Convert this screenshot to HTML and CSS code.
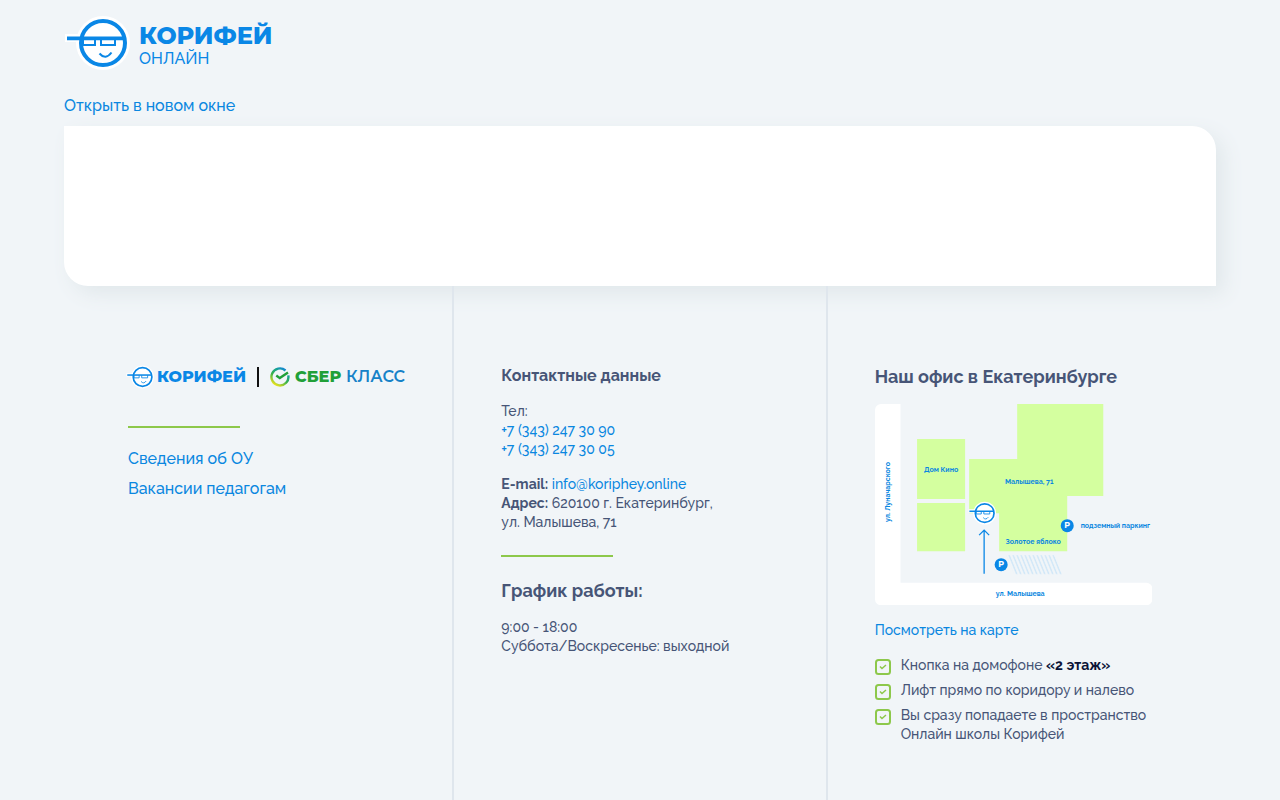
FILE: index.html
```html
<!DOCTYPE html>
<html lang="ru">
<head>
<meta charset="utf-8">
<meta name="viewport" content="width=device-width, initial-scale=1">
<title>Корифей Онлайн</title>
<link rel="stylesheet" href="styles.css">
</head>
<body>
<svg class="defs" width="0" height="0" aria-hidden="true">
  <symbol id="face" viewBox="0 0 66 56">
    <circle cx="39" cy="28" r="27" fill="#fff"/>
    <path d="M1 19h16v8H1z" fill="#fff"/>
    <g fill="none" stroke="#0a87e6">
      <circle cx="39" cy="28" r="22" stroke-width="4"/>
      <path d="M3 23.400h58" stroke-width="3.600"/>
      <path d="M19 24v6h12v-6M37 24v6h14v-6" stroke-width="2"/>
      <path d="M35.500 38.500q6 7 12-1" stroke-width="2"/>
    </g>
  </symbol>
</svg>
<header class="header">
  <a class="brand" href="#" aria-label="Корифей Онлайн">
    <svg class="brand-face"><use href="#face"/></svg>
    <span class="brand-text"><span class="brand-name">КОРИФЕЙ</span><span class="brand-sub">ОНЛАЙН</span></span>
  </a>
</header>
<main class="main">
  <a class="open-link" href="#">Открыть в новом окне</a>
  <section class="card"></section>
</main>
<footer class="footer">
  <div class="column">
    <div class="partners">
      <svg class="partner-face"><use href="#face"/></svg>
      <span class="partner-name">КОРИФЕЙ</span>
      <span class="partner-rule"></span>
      <svg class="sber" viewBox="0 0 20 20" aria-hidden="true">
        <defs><linearGradient id="ring" x1="0.2" y1="1" x2="0.8" y2="0">
          <stop offset="0" stop-color="#f4e51d"/><stop offset="0.45" stop-color="#36b14a"/><stop offset="0.750" stop-color="#16a394"/><stop offset="1" stop-color="#1584d8"/>
        </linearGradient></defs>
        <path d="M15.500 3.500A8.500 8.500 0 1 0 18.300 8.400" fill="none" stroke="url(#ring)" stroke-width="2.400"/>
        <path d="M6.300 8.500l3.500 2.600L18 5.600" fill="none" stroke="#21a038" stroke-width="2.400"/>
      </svg>
      <span class="sber-name">СБЕР</span><span class="class-name">КЛАСС</span>
    </div>
    <hr class="rule">
    <nav class="links">
      <a href="#">Сведения об ОУ</a>
      <a href="#">Вакансии педагогам</a>
    </nav>
  </div>
  <div class="column">
    <h3 class="subtitle">Контактные данные</h3>
    <p class="text">Тел:<br><a href="#">+7 (343) 247 30 90</a><br><a href="#">+7 (343) 247 30 05</a></p>
    <p class="text"><b>E-mail:</b> <a href="#">info@koriphey.online</a><br><b>Адрес:</b> 620100 г. Екатеринбург,<br>ул. Малышева, 71</p>
    <hr class="rule rule-contacts">
    <h2 class="title">График работы:</h2>
    <p class="text">9:00 - 18:00<br>Суббота/Воскресенье: выходной</p>
  </div>
  <div class="column">
    <h2 class="title">Наш офис в Екатеринбурге</h2>
    <svg class="map" viewBox="0 0 277 201" role="img" aria-label="Схема проезда">
      <defs><pattern id="hatch" width="4" height="19" patternUnits="userSpaceOnUse" patternTransform="skewX(22)">
        <path d="M1 0v19" stroke="#cfe7f8" stroke-width="1.500"/>
      </pattern></defs>
      <path d="M6 0H25.500V178.500H271a6 6 0 0 1 6 6V195a6 6 0 0 1-6 6H6a6 6 0 0 1-6-6V6a6 6 0 0 1 6-6z" fill="#fff"/>
      <g fill="#d4ff9f">
        <path d="M42 35h48v60H42zM42 99h48v48H42z"/>
        <path d="M142 0h86v92h-36v55h-68v-38H94V55h48z"/>
      </g>
      <path d="M131 151h48l8 19h-48z" fill="url(#hatch)"/>
      <use href="#face" x="93" y="97" width="28" height="24"/>
      <path d="M109 169.500V126M104 131l5-5 5 5" fill="none" stroke="#0a87e6" stroke-width="1.300"/>
      <circle cx="192" cy="121.500" r="6.500" fill="#0a87e6"/>
      <circle cx="126" cy="160.500" r="6.500" fill="#0a87e6"/>
      <g class="map-parking"><text x="192" y="124">P</text><text x="126" y="163">P</text></g>
      <g class="map-label">
        <text x="66" y="68">Дом Кино</text>
        <text x="154" y="80">Малышева, 71</text>
        <text x="158" y="140">Золотое яблоко</text>
        <text x="240" y="124">подземный паркинг</text>
        <text x="145" y="192">ул. Малышева</text>
        <text transform="translate(15 88) rotate(-90)">ул. Луначарского</text>
      </g>
    </svg>
    <a class="map-link" href="#">Посмотреть на карте</a>
    <ul class="steps">
      <li><svg class="check" viewBox="0 0 16 16"><rect x="1" y="1" width="14" height="14" rx="2.500"/><path d="M5 7.500l2 2 4-3.500"/></svg><span>Кнопка на домофоне <b>«2 этаж»</b></span></li>
      <li><svg class="check" viewBox="0 0 16 16"><rect x="1" y="1" width="14" height="14" rx="2.500"/><path d="M5 7.500l2 2 4-3.500"/></svg><span>Лифт прямо по коридору и налево</span></li>
      <li><svg class="check" viewBox="0 0 16 16"><rect x="1" y="1" width="14" height="14" rx="2.500"/><path d="M5 7.500l2 2 4-3.500"/></svg><span>Вы сразу попадаете в пространство<br>Онлайн школы Корифей</span></li>
    </ul>
  </div>
</footer>
</body>
</html>
```
FILE: styles.css
```css
* { box-sizing: border-box; margin: 0; padding: 0; }
body {
  min-height: 100vh;
  display: flex;
  flex-direction: column;
  background: #f1f5f8;
  color: #475577;
  font-family: Raleway, Lato, "Open Sans", sans-serif;
  font-size: 16px;
  font-weight: 500;
  line-height: 20px;
}
a { color: #0a87e0; text-decoration: none; }
.defs { position: absolute; }
.header { padding: 15px 64px 0; }
.brand { display: inline-flex; gap: 9px; color: #0a87e6; }
.brand-face { width: 66px; height: 56px; flex: none; }
.brand-text { display: flex; flex-direction: column; padding-top: 6px; }
.brand-name { font-family: Montserrat, Raleway, sans-serif; font-size: 24px; line-height: 30px; font-weight: 800; }
.brand-sub { font-size: 16px; line-height: 16px; font-weight: 500; }
.main { padding: 20px 64px 0; }
.open-link { display: block; }
.card {
  height: 160px;
  margin-top: 10px;
  background: #fff;
  border-radius: 0 24px 0 24px;
  box-shadow: 8px 8px 20px #e1e8eb;
}
.footer { flex: 1; display: flex; padding: 0 128px; }
.column { box-sizing: content-box; flex: 1 1 0; min-width: 0; padding: 80px 47px 48px; }
.column:first-child { padding-left: 0; }
.column:last-child { padding-right: 0; }
.column + .column { border-left: 2px solid #dfe6ed; }
.partners { display: flex; align-items: center; height: 22px; font-family: Montserrat, Raleway, sans-serif; font-size: 16px; white-space: nowrap; }
.partner-face { width: 28px; height: 24px; margin: 0 3px 0 -2px; flex: none; }
.partner-name { color: #0a87e6; font-weight: 800; }
.partner-rule { flex: none; width: 2px; height: 20px; background: #111; margin: 0 11px; }
.sber { width: 20px; height: 20px; flex: none; margin-right: 5px; }
.sber-name { color: #21a038; font-weight: 800; margin-right: 5px; }
.class-name { color: #1682c8; font-weight: 600; }
.rule { width: 112px; height: 2px; border: 0; background: #8dc84b; margin: 38px 0 21px; }
.links { display: flex; flex-direction: column; gap: 10px; }
.subtitle { font-size: 16px; line-height: 20px; font-weight: 700; margin-bottom: 16px; }
.text { font-size: 14px; line-height: 19px; margin-bottom: 16px; }
.rule-contacts { margin: 23px 0; }
.title { font-size: 18px; line-height: 21px; font-weight: 700; margin-bottom: 17px; white-space: nowrap; }
.map { display: block; width: 100%; height: auto; }
.map-label { fill: #0a87e0; font-size: 7px; font-weight: 700; text-anchor: middle; }
.map-parking { fill: #fff; font-family: Montserrat, "Open Sans", sans-serif; font-size: 8px; font-weight: 700; text-anchor: middle; }
.map-link { display: block; margin: 15px 0 16px; font-size: 14px; line-height: 20px; }
.steps { list-style: none; display: flex; flex-direction: column; gap: 6px; font-size: 14px; line-height: 19px; }
.steps li { display: flex; gap: 10px; white-space: nowrap; }
.steps b { color: #0b1437; }
.check { flex: none; width: 16px; height: 16px; margin-top: 3px; fill: none; stroke: #8dc84b; stroke-width: 2; }
.check path { stroke-width: 1.500; }
```
